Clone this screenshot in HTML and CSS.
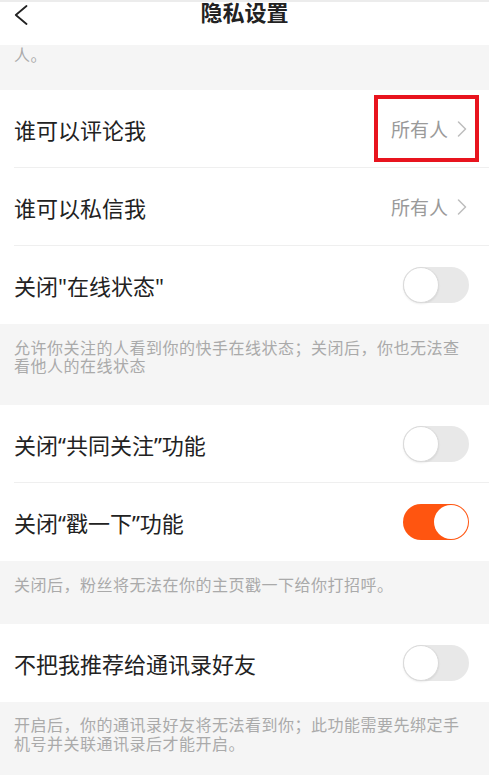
FILE: index.html
```html
<!DOCTYPE html>
<html lang="zh-CN">
<head>
<meta charset="utf-8">
<title>隐私设置</title>
<link rel="stylesheet" href="styles.css">
</head>
<body>
<div class="page">
  <header class="topbar">
    <span class="back">
      <svg width="14" height="20" viewBox="0 0 14 20"><path d="M12.5 1 L1.8 10 L12.5 19" fill="none" stroke="#222" stroke-width="1.8" stroke-linecap="round" stroke-linejoin="round"/></svg>
    </span>
    <h1 class="title">隐私设置</h1>
    <span class="spacer"></span>
  </header>

  <div class="note note-top">人。</div>

  <section class="group">
    <div class="row">
      <span class="label">谁可以评论我</span>
      <span class="value">所有人<svg class="chev" width="10" height="16" viewBox="0 0 10 16"><path d="M1.5 1 L8.5 8 L1.5 15" fill="none" stroke="#bdbdbd" stroke-width="1.5" stroke-linecap="round" stroke-linejoin="round"/></svg></span>
      <span class="highlight"></span>
    </div>
    <div class="row">
      <span class="label">谁可以私信我</span>
      <span class="value">所有人<svg class="chev" width="10" height="16" viewBox="0 0 10 16"><path d="M1.5 1 L8.5 8 L1.5 15" fill="none" stroke="#bdbdbd" stroke-width="1.5" stroke-linecap="round" stroke-linejoin="round"/></svg></span>
    </div>
    <div class="row">
      <span class="label">关闭"在线状态"</span>
      <span class="switch"><span class="knob"></span></span>
    </div>
  </section>

  <div class="note">允许你关注的人看到你的快手在线状态；关闭后，你也无法查<br>看他人的在线状态</div>

  <section class="group">
    <div class="row">
      <span class="label">关闭“共同关注”功能</span>
      <span class="switch"><span class="knob"></span></span>
    </div>
    <div class="row">
      <span class="label">关闭“戳一下”功能</span>
      <span class="switch on"><span class="knob"></span></span>
    </div>
  </section>

  <div class="note">关闭后，粉丝将无法在你的主页戳一下给你打招呼。</div>

  <section class="group">
    <div class="row">
      <span class="label">不把我推荐给通讯录好友</span>
      <span class="switch"><span class="knob"></span></span>
    </div>
  </section>

  <div class="note">开启后，你的通讯录好友将无法看到你；此功能需要先绑定手<br>机号并关联通讯录后才能开启。</div>
</div>
</body>
</html>
```

FILE: styles.css
```css
html, body {
  margin: 0;
  padding: 0;
  background: #f5f5f5;
}

body {
  font-family: "Noto Sans", "Noto Sans CJK SC", sans-serif;
  color: #222;
}

.page {
  width: 489px;
  min-height: 775px;
  background: #f5f5f5;
}

.topbar {
  box-sizing: border-box;
  height: 45px;
  background: #fff;
  border-top: 2px solid #ececec;
  display: grid;
  grid-template-columns: 1fr auto 1fr;
  align-items: start;
}

.back {
  display: flex;
  padding-left: 14px;
  padding-top: 3px;
}

.title {
  margin: 0;
  font-size: 22px;
  font-weight: 700;
  line-height: 20px;
  color: #222;
}

.note {
  box-sizing: border-box;
  padding: 14.5px 14px 29.5px;
  font-size: 16px;
  letter-spacing: 0.5px;
  line-height: 18.5px;
  color: #aaaaaa;
}

.note-top {
  height: 45px;
  padding-top: 0;
  padding-bottom: 0;
  line-height: 20px;
}

.group {
  background: #fff;
  padding-left: 14px;
}

.row {
  position: relative;
  box-sizing: border-box;
  height: 78px;
  padding-right: 20px;
  display: flex;
  align-items: center;
  justify-content: space-between;
  border-bottom: 1px solid #efefef;
}

.row:last-child {
  border-bottom: none;
}

.label {
  font-size: 22px;
  color: #222;
}

.value {
  display: flex;
  align-items: center;
  font-size: 19px;
  color: #9a9a9a;
  margin-right: 2px;
}

.chev {
  margin-left: 9px;
}

.highlight {
  position: absolute;
  top: 5px;
  bottom: 5px;
  right: 10px;
  width: 105px;
  box-sizing: border-box;
  border: 4px solid #e8141e;
}

.switch {
  box-sizing: border-box;
  width: 66px;
  height: 36px;
  border-radius: 18px;
  background: #e8e8e8;
  display: flex;
  align-items: center;
  justify-content: flex-start;
}

.knob {
  box-sizing: border-box;
  width: 36px;
  height: 36px;
  border-radius: 50%;
  background: #fff;
  border: 1px solid #dadada;
  box-shadow: 0 1px 2px rgba(0, 0, 0, 0.08);
}

.switch.on {
  background: #ff5510;
  justify-content: flex-end;
  padding-right: 1px;
}

.switch.on .knob {
  width: 34px;
  height: 34px;
  border: none;
  box-shadow: none;
}
```
